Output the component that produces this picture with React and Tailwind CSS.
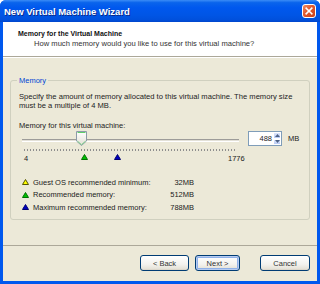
import React from "react";

function Tri({ fill, stroke }) {
  return (
    <svg width="7" height="6" viewBox="0 0 7 6" className="block">
      <path d="M3.5 0.5 L6.5 5.5 L0.5 5.5 Z" fill={fill} stroke={stroke} strokeWidth="1" />
    </svg>
  );
}

function Btn({ children, def, w }) {
  return (
    <div
      className={
        "h-[16px] flex items-center justify-center rounded-[3px] border border-[#003c74] bg-[linear-gradient(to_bottom,#ffffff,#f3f2ee_60%,#e6e3d9_90%,#d6d0c5)] text-[7.5px] leading-[9px] text-[#333] " +
        (def ? "shadow-[inset_0_0_0_1px_#b6cbf0,inset_0_0_0_2px_#8fb0e8] " : "") +
        w
      }
    >
      {children}
    </div>
  );
}

export default function App() {
  return (
    <div className="w-[320px] h-[284px] flex flex-col bg-[#0058ee] rounded-t-[6px] overflow-hidden font-['Liberation_Sans',Arial,sans-serif]">
      {/* Title bar */}
      <div className="h-[22px] shrink-0 flex items-center pl-[4px] pr-[4px] bg-[linear-gradient(to_bottom,#3b8cf6_0%,#0a64ec_12%,#0058ee_35%,#0055e5_70%,#0050dc_90%,#0046cc_100%)]">
        <span className="text-white font-bold text-[9.5px] leading-[11px] [text-shadow:1px_1px_0_#0b2a8a]">
          New Virtual Machine Wizard
        </span>
        <div className="ml-auto w-[14px] h-[14px] rounded-[3px] border border-white bg-[linear-gradient(135deg,#f08a60_0%,#e2592f_45%,#c8401a_100%)] flex items-center justify-center">
          <svg width="8" height="8" viewBox="0 0 8 8">
            <path d="M1.2 1.2 L6.8 6.8 M6.8 1.2 L1.2 6.8" stroke="#fff" strokeWidth="1.6" strokeLinecap="square" />
          </svg>
        </div>
      </div>

      {/* Client area */}
      <div className="flex-1 flex flex-col mx-[3px] mb-[3px] bg-[#ece9d8]">
        {/* Header */}
        <div className="h-[35px] shrink-0 bg-white border-b border-[#aca899] pl-[15px] pt-[7px]">
          <div className="font-bold text-[7px] leading-[9px] text-[#111]">Memory for the Virtual Machine</div>
          <div className="ml-[16px] mt-[1px] text-[7.6px] leading-[9px] text-[#333]">
            How much memory would you like to use for this virtual machine?
          </div>
        </div>
        <div className="h-px bg-white shrink-0" />

        {/* Group box */}
        <div className="relative mt-[22px] mx-[7px] h-[140px] border border-[#d0d0bf] rounded-[3px] pl-[8px] pt-[11px] text-[7.5px] leading-[9px] text-[#222]">
          <span className="absolute -top-[5px] left-[6px] px-[2px] bg-[#ece9d8] text-[#0046d5]">Memory</span>
          <div className="text-[7.6px]">
            Specify the amount of memory allocated to this virtual machine. The memory size
            <br />
            must be a multiple of 4 MB.
          </div>
          <div className="mt-[11px]">Memory for this virtual machine:</div>

          {/* Slider row */}
          <div className="mt-[1px] h-[15px] flex items-center">
            <div className="relative w-[222px] h-[15px]">
              <div className="absolute left-[3px] right-[2px] top-[8px] h-[3px] border-t border-[#9d9c99] border-b border-b-white bg-[#e3e1d8]" />
              <div className="absolute left-[57px] top-0">
                <svg width="11" height="15" viewBox="0 0 11 15" className="block">
                  <defs>
                    <linearGradient id="thb" x1="0" y1="0" x2="0" y2="1">
                      <stop offset="0" stopColor="#ffffff" />
                      <stop offset="1" stopColor="#e2dfd4" />
                    </linearGradient>
                  </defs>
                  <path d="M0.5 0.5 H10.5 V10 L5.5 14.5 L0.5 10 Z" fill="url(#thb)" stroke="#8c9aa8" />
                  <path d="M1.5 1.5 H9.5" stroke="#5fce6a" strokeWidth="1.2" />
                  <path d="M1.5 10.2 L5.5 13.6 L9.5 10.2" fill="none" stroke="#7ed389" strokeWidth="1" />
                </svg>
              </div>
            </div>
            <div className="ml-[7px] w-[34px] h-[15px] border border-[#7f9db9] bg-white flex">
              <div className="flex-1 text-right pr-[1px] leading-[13px] text-[#222]">488</div>
              <div className="w-[8px] flex flex-col">
                <div className="flex-1 bg-[linear-gradient(to_bottom,#dde6fb,#b9cbf5)] border border-white flex items-center justify-center">
                  <svg width="5" height="3" viewBox="0 0 5 3"><path d="M0 3 L2.5 0 L5 3 Z" fill="#4d6185" /></svg>
                </div>
                <div className="flex-1 bg-[linear-gradient(to_bottom,#dde6fb,#b9cbf5)] border border-white flex items-center justify-center">
                  <svg width="5" height="3" viewBox="0 0 5 3"><path d="M0 0 L2.5 3 L5 0 Z" fill="#4d6185" /></svg>
                </div>
              </div>
            </div>
            <span className="ml-[6px]">MB</span>
          </div>

          {/* Ticks */}
          <div className="mt-[3px] ml-[5px] w-[213px] h-[2px] bg-[repeating-linear-gradient(to_right,#8e8e8e_0,#8e8e8e_1px,transparent_1px,transparent_3px)]" />

          {/* Scale labels and markers */}
          <div className="relative h-[10px] mt-[3px]">
            <span className="absolute left-[5px] top-0">4</span>
            <span className="absolute left-[209px] top-0">1776</span>
            <div className="absolute left-[62px] top-0">
              <Tri fill="#00c000" stroke="#007000" />
            </div>
            <div className="absolute left-[95px] top-0">
              <Tri fill="#0000c0" stroke="#000070" />
            </div>
          </div>

          {/* Legend */}
          <div className="mt-[12px] w-[175px]">
            {[
              ["#ffff00", "#555500", "Guest OS recommended minimum:", "32MB"],
              ["#00c000", "#007000", "Recommended memory:", "512MB"],
              ["#0000c0", "#000070", "Maximum recommended memory:", "788MB"],
            ].map(([f, s, label, val]) => (
              <div key={label} className="h-[12.5px] flex items-center">
                <div className="ml-[3px]">
                  <Tri fill={f} stroke={s} />
                </div>
                <span className="ml-[4px]">{label}</span>
                <span className="ml-auto">{val}</span>
              </div>
            ))}
          </div>
        </div>

        {/* Separator */}
        <div className="mt-[25px] border-t border-[#aca899] h-px bg-white shrink-0" />

        {/* Buttons */}
        <div className="mt-[9px] flex pr-[7px] justify-end">
          <Btn w="w-[49px]">&lt; Back</Btn>
          <Btn def w="ml-[6px] w-[45px]">Next &gt;</Btn>
          <Btn w="ml-[20px] w-[50px]">Cancel</Btn>
        </div>
      </div>
    </div>
  );
}
